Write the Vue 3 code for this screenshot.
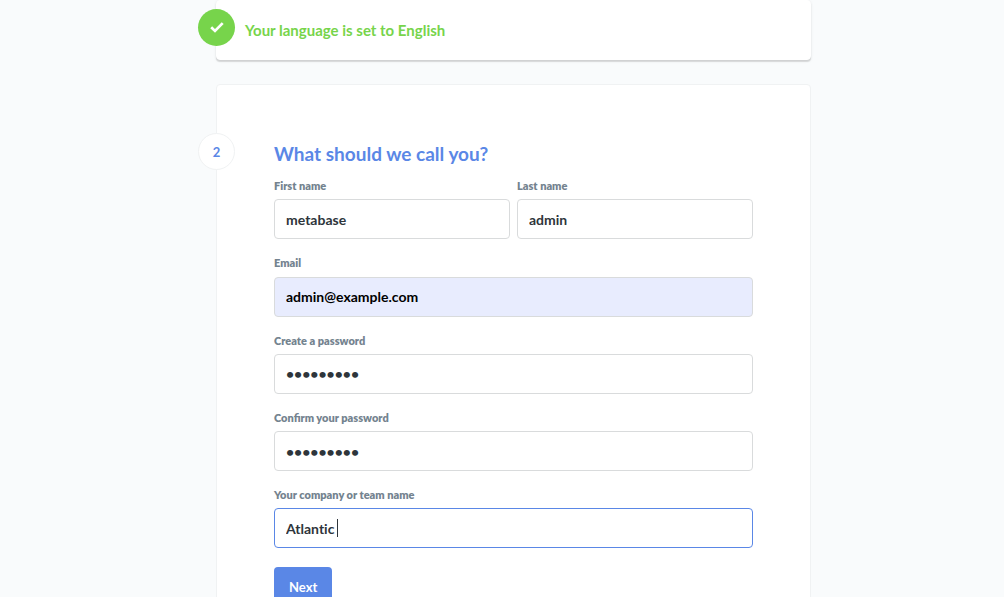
<script setup>
import { ref, onMounted } from 'vue';

const user = ref({
    firstName: 'metabase',
    lastName: 'admin',
    email: 'admin@example.com',
    password: 'metabase1',
    confirm: 'metabase1',
    company: 'Atlantic'
});

const companyInput = ref(null);

onMounted(() => {
    const el = companyInput.value;
    el.focus({ preventScroll: true });
    el.setSelectionRange(el.value.length, el.value.length);
});
</script>

<template>
    <main class="setup">
        <section class="step step-done">
            <span class="step-badge badge-done">
                <svg width="14" height="14" viewBox="0 0 14 14" aria-hidden="true">
                    <path d="M1.2 6.2 L5 9.9 L12.7 2.1" fill="none" stroke="#fff" stroke-width="2.7" />
                </svg>
            </span>
            <h3 class="done-title">Your language is set to English</h3>
        </section>

        <section class="step step-active">
            <span class="step-badge badge-number">2</span>
            <h2 class="title">What should we call you?</h2>
            <form class="form" @submit.prevent>
                <div class="row">
                    <div class="field">
                        <label for="first-name">First name</label>
                        <input id="first-name" v-model="user.firstName" type="text">
                    </div>
                    <div class="field">
                        <label for="last-name">Last name</label>
                        <input id="last-name" v-model="user.lastName" type="text">
                    </div>
                </div>
                <div class="field">
                    <label for="email">Email</label>
                    <input id="email" v-model="user.email" class="autofilled" type="email">
                </div>
                <div class="field">
                    <label for="password">Create a password</label>
                    <input id="password" v-model="user.password" type="password">
                </div>
                <div class="field">
                    <label for="confirm">Confirm your password</label>
                    <input id="confirm" v-model="user.confirm" type="password">
                </div>
                <div class="field">
                    <label for="company">Your company or team name</label>
                    <input id="company" ref="companyInput" v-model="user.company" type="text">
                    <span class="caret"></span>
                </div>
                <button class="btn-next" type="submit">Next</button>
            </form>
        </section>
    </main>
</template>

<style>
body {
    background: #f9fbfc;
}
</style>

<style scoped>
.setup {
    box-sizing: border-box;
    display: flex;
    flex-direction: column;
    gap: 24px;
    max-width: 618px;
    margin: 0 auto;
    padding: 0 0 24px 23px;
    font-family: Lato, "Liberation Sans", sans-serif;
    color: #2e353b;
}

.step {
    position: relative;
    background: #fff;
    border: 1px solid #f0f2f3;
    border-radius: 4px;
}

.step-done {
    padding: 18px 28px;
    border-color: #fff;
    box-shadow: 0 1px 3px rgba(0, 0, 0, 0.1), 0 2px 1px rgba(0, 0, 0, 0.1);
}

.step-active {
    padding: 57px;
}

.step-badge {
    position: absolute;
    left: -19px;
    box-sizing: border-box;
    display: flex;
    align-items: center;
    justify-content: center;
    width: 37px;
    height: 37px;
    border-radius: 50%;
}

.badge-done {
    top: 8px;
    background: #77d44b;
}

.badge-number {
    top: 48px;
    background: #fff;
    border: 1px solid #f0f2f3;
    color: #5a87e6;
    font-size: 13px;
    font-weight: 700;
}

.done-title {
    margin: 0;
    color: #77d44b;
    font-size: 15px;
    line-height: 22px;
    font-weight: 700;
}

.title {
    margin: 0 0 13px;
    color: #5a87e6;
    font-size: 19px;
    line-height: 24px;
    font-weight: 700;
}

.form {
    display: flex;
    flex-direction: column;
    gap: 17px;
}

.row {
    display: flex;
    gap: 7px;
}

.field {
    position: relative;
    display: flex;
    flex: 1;
    flex-direction: column;
    gap: 6px;
    min-width: 0;
}

label {
    color: #74838f;
    font-size: 11px;
    line-height: 1.3;
    font-weight: 800;
}

input {
    box-sizing: border-box;
    width: 100%;
    height: 40px;
    padding: 0 11px;
    background: #fff;
    border: 1px solid #d9dbdc;
    border-radius: 4px;
    outline: none;
    caret-color: transparent;
    color: #2e353b;
    font-family: inherit;
    font-size: 14px;
    font-weight: 700;
    font-variant-ligatures: none;
}

input:focus {
    border-color: #5a87e6;
}

.autofilled {
    background: #e8ecfe;
    color: #000;
}

.caret {
    position: absolute;
    bottom: 11px;
    left: 63px;
    width: 1px;
    height: 18px;
    background: #2e353b;
}

.btn-next {
    align-self: flex-start;
    height: 40px;
    margin-top: 2px;
    padding: 0 15px;
    background: #5a87e6;
    border: 0;
    border-radius: 4px;
    color: #fff;
    font-family: inherit;
    font-size: 13px;
    font-weight: 700;
    cursor: pointer;
}
</style>
